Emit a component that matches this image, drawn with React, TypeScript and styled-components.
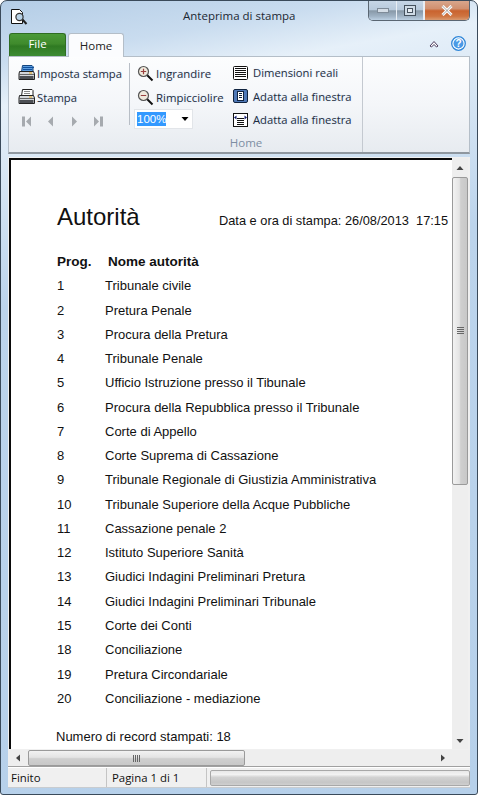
import React from 'react';
import styled, { createGlobalStyle } from 'styled-components';

const Global = createGlobalStyle`
  html, body { margin: 0; padding: 0; width: 478px; height: 795px; overflow: hidden; background: #fff; }
  * { box-sizing: border-box; }
`;

const Win = styled.div`
  width: 478px; height: 795px; display: flex; flex-direction: column;
  border: 1px solid #3a4a5a; border-radius: 7px 7px 3px 3px; overflow: hidden;
  background: linear-gradient(170deg, #b4cde6 0%, #c9dcef 7%, #e6f0f9 12%, #bcd4ec 35%, #b6d0ea 100%);
  font-family: "Open Sans", "Noto Sans", sans-serif; color: #1e2a3a;
`;
const TitleBar = styled.div`
  height: 31px; flex: none; display: flex; align-items: flex-start; position: relative;
  padding: 7px 0 0 9px;
`;
const Title = styled.div`
  position: absolute; left: 182px; top: 7px; font-size: 11.5px; line-height: 16px; color: #1c2833; white-space: nowrap;
`;
const Caption = styled.div`
  position: absolute; right: 7px; top: 0; width: 102px; height: 20px; display: flex;
  border: 1px solid #5a6672; border-top: none; border-radius: 0 0 5px 5px; overflow: hidden;
`;
const CapBtn = styled.div<{ $w: number; $close?: boolean }>`
  width: ${p => p.$w}px; display: flex; align-items: center; justify-content: center;
  border-left: ${p => p.$close ? '1px solid #e8eef4' : 'none'};
  border-right: ${p => p.$close ? 'none' : '1px solid #e8eef4'};
  background: ${p => p.$close
    ? 'linear-gradient(#d8a68c 0%, #d09070 40%, #c9632f 52%, #cf7440 80%, #d89a70 100%)'
    : 'linear-gradient(#c6d6e6 0%, #b8cadc 45%, #8899a8 52%, #9fb2c4 80%, #bcd0e2 100%)'};
`;
const TabRow = styled.div`
  height: 24px; flex: none; display: flex; align-items: flex-end; padding-left: 8px; position: relative;
`;
const FileTab = styled.div`
  width: 57px; height: 23px; border-radius: 3px 3px 0 0; border: 1px solid #2f6d22; border-bottom: none;
  background: linear-gradient(#4b9a38 0%, #3f8a2c 45%, #2f7a22 55%, #3d8b33 100%);
  color: #fff; font-size: 11.5px; font-weight: 400; line-height: 20px; text-align: center; margin-right: 2px;
`;
const HomeTab = styled.div`
  width: 56px; height: 24px; background: #fbfcfe; border: 1px solid #b4bec8; border-bottom: none;
  border-radius: 3px 3px 0 0; font-size: 11.5px; line-height: 23px; text-align: center; color: #222; margin-bottom: -1px; position: relative;
`;
const RightTools = styled.div`
  position: absolute; right: 11px; top: 4px; display: flex; gap: 12px; align-items: center;
`;
const Ribbon = styled.div`
  margin: 0 7px; height: 98px; flex: none; display: flex; border: 1px solid #b4bec8; border-bottom: 2px solid #8f979f;
  background: linear-gradient(#fcfdfe 0%, #f4f6f9 50%, #e7ebf0 100%);
`;
const LeftGroup = styled.div`
  width: 121px; flex: none; display: flex; flex-direction: column; padding: 4px 0 0 9px; position: relative;
  &::after { content: ""; position: absolute; right: 0; top: 6px; height: 62px; width: 1px; background: #b8bec6; }
`;
const MainGroup = styled.div`
  width: 233px; flex: none; border-right: 1px solid #c4c9d0; display: flex; flex-direction: column;
`;
const MainCols = styled.div`
  display: flex; height: 77px; padding: 4px 0 0 7px;
`;
const Col1 = styled.div`
  width: 96px; display: flex; flex-direction: column;
`;
const Col2 = styled.div`
  display: flex; flex-direction: column;
`;
const Btn = styled.div`
  height: 24px; display: flex; align-items: center; gap: 2px; font-size: 11.25px; color: #1f2d3d; white-space: nowrap;
  text-shadow: 0 0 2px #cfe3fa;
`;
const LensBtn = styled(Btn)`
  font-size: 11.4px;
`;
const WideBtn = styled(Btn)`
  gap: 5px; height: 23.5px;
`;
const NavRow = styled.div`
  height: 24px; display: flex; align-items: center; gap: 11px; padding-left: 2px;
`;
const Combo = styled.div`
  width: 59px; height: 20px; background: #fff; border: 1px solid #e2e5e9; display: flex; align-items: center;
  justify-content: space-between; padding: 0 3px 0 2px; font-family: "Liberation Sans", sans-serif; font-size: 11.5px; margin-left: -3px;
`;
const Selected = styled.span`
  background: #3399ff; color: #fff; line-height: 14px;
`;
const GroupLabel = styled.div`
  text-align: center; font-size: 11.5px; color: #7d8ea3; line-height: 16px; margin-top: 1px;
`;
const Preview = styled.div`
  margin: 3px 7px 0; flex: 1; min-height: 0; display: flex; flex-direction: column; background: #f0f0f0;
  border-bottom: 1px solid #a0a0a0;
`;
const PreviewTop = styled.div`
  flex: 1; min-height: 0; display: flex; padding: 1px 2px 0 1px;
`;
const Page = styled.div`
  flex: 1; min-width: 0; background: #fff; border-top: 2px solid #0a0a0a; border-left: 2px solid #0a0a0a;
  padding: 42px 0 0 46px; font-family: "Liberation Sans", Arial, sans-serif; color: #111; position: relative; overflow: hidden;
`;
const HeaderLine = styled.div`
  display: flex; align-items: baseline; height: 30px; white-space: nowrap;
`;
const Heading = styled.div`
  font-size: 24px; width: 162px; flex: none; line-height: 30px;
`;
const Stamp = styled.div`
  font-size: 12.8px;
`;
const ColHead = styled.div`
  display: flex; font-weight: 700; font-size: 13.5px; margin-top: 20px; height: 21px; line-height: 20px;
`;
const HeadProg = styled.div`
  width: 51px; flex: none;
`;
const Rows = styled.div`
  display: grid; grid-auto-rows: 24.28px; margin-top: 1.3px;
`;
const Row = styled.div`
  display: flex; font-size: 13px; line-height: 24px; white-space: nowrap;
`;
const RowNum = styled.div`
  width: 48px; flex: none;
`;
const Footer = styled.div`
  font-size: 13px; line-height: 16px; margin-top: 18px; margin-left: -1px;
`;
const VScroll = styled.div`
  width: 16px; flex: none; display: flex; flex-direction: column; background: #eeeeee; padding-top: 3px;
`;
const ArrowBox = styled.div<{ $w?: number; $h?: number }>`
  width: ${p => p.$w ? p.$w + 'px' : '100%'}; height: ${p => p.$h ? p.$h + 'px' : '100%'}; flex: none;
  display: flex; align-items: center; justify-content: center;
`;
const VThumb = styled.div`
  height: 308px; flex: none; border: 1px solid #9a9a9a; border-radius: 2px;
  background: linear-gradient(90deg, #f2f2f2 0%, #e4e4e4 45%, #cfcfcf 55%, #c8c8c8 100%);
  display: flex; align-items: center; justify-content: center;
`;
const HScroll = styled.div`
  height: 16px; flex: none; display: flex; background: #eeeeee; margin: 1px 0 0;
`;
const HThumb = styled.div`
  width: 217px; flex: none; border: 1px solid #9a9a9a; border-radius: 2px;
  background: linear-gradient(#f2f2f2 0%, #e4e4e4 45%, #cfcfcf 55%, #c8c8c8 100%);
  display: flex; align-items: center; justify-content: center;
`;
const Spacer = styled.div`
  flex: 1;
`;
const Status = styled.div`
  margin: 0 7px 6px; height: 21px; flex: none; display: flex; align-items: center; background: #f0f0f0;
  border-top: 1px solid #fff; font-size: 11.4px; color: #111; border-bottom: 1px solid #c8ccd0;
`;
const StatusCell = styled.div<{ $w: number }>`
  width: ${p => p.$w}px; flex: none; height: 100%; border-right: 1px solid #c4c4c4; padding-left: ${p => p.$w > 99 ? 5 : 3}px; line-height: 20px;
`;
const Progress = styled.div`
  flex: 1; height: 16px; margin: 0 0 0 3px; border: 1px solid #a8a8a8; border-radius: 2px;
  background: linear-gradient(#e8e8e8 0%, #f2f2f2 25%, #d2d2d2 45%, #c6c6c6 80%, #cfcfcf 100%);
`;

const Printer = ({ setup }: { setup?: boolean }) => (
  <svg width="17" height="16" viewBox="0 0 17 16">
    <path d="M4.500 0.500h9.500l1 1v5.500H3.500z" fill={setup ? '#5a9de0' : '#fff'} stroke={setup ? '#14457e' : '#222'} />
    {setup
      ? <path d="M5 2.500h11M5 4.500h9" stroke="#12509c" />
      : <path d="M6 2.500h6M6 4.500h6" stroke="#888" />}
    <path d="M1.500 6.500h14l1 2.500v5.500h-15.500v-5.500z" fill="#d4d7db" stroke="#222" />
    <path d="M1 9.500h15" stroke="#666" />
    <rect x="1.500" y="11" width="14" height="3" fill="#4c4f54" />
    <path d="M11 8h3" stroke="#e8a818" />
  </svg>
);
const Lens = ({ plus }: { plus?: boolean }) => (
  <svg width="17" height="17" viewBox="0 0 17 17">
    <path d="M10 10l5.500 5.500" stroke="#111" strokeWidth="2" />
    <circle cx="6.500" cy="6.500" r="5" fill="#efe9dc" stroke="#555" strokeWidth="1.200" />
    <path d="M3.800 6.500h5.400" stroke="#9a4040" strokeWidth="1.200" />
    {plus && <path d="M6.500 3.800v5.400" stroke="#9a4040" strokeWidth="1.200" />}
  </svg>
);
const Actual = () => (
  <svg width="15" height="14" viewBox="0 0 15 14">
    <rect x="0.500" y="0.500" width="14" height="13" rx="1" fill="#fff" stroke="#111" />
    <path d="M2 2.500h11M2 4.500h11M2 6.500h11M2 8.500h11M2 10.500h11" stroke="#111" />
  </svg>
);
const FitPage = () => (
  <svg width="15" height="14" viewBox="0 0 15 14">
    <rect x="0.500" y="0.500" width="14" height="13" rx="1.500" fill="#4f79b8" stroke="#10233f" />
    <rect x="4.500" y="2.500" width="6" height="9" fill="#fff" stroke="#10233f" />
    <path d="M6 4.500h3M6 6.500h3M6 8.500h3" stroke="#10233f" />
  </svg>
);
const FitWidth = () => (
  <svg width="15" height="14" viewBox="0 0 15 14">
    <rect x="0.500" y="0.500" width="14" height="13" fill="#fff" stroke="#111" />
    <path d="M4 5.500h7M4 7.500h7M4 9.500h7M4 11.500h7" stroke="#111" />
    <path d="M1 4.500l2.500-2v4zM14 4.500l-2.500-2v4z" fill="#101a70" />
  </svg>
);
const Nav = ({ dir, bar }: { dir: 'l' | 'r'; bar?: boolean }) => (
  <svg width="13" height="11" viewBox="0 0 13 11">
    {dir === 'l'
      ? <path d={bar ? 'M11 0.500v10L6 5.500z' : 'M9 0.500v10L4 5.500z'} fill="#a6aaaf" />
      : <path d={bar ? 'M2 0.500v10L7 5.500z' : 'M4 0.500v10L9 5.500z'} fill="#a6aaaf" />}
    {bar && <rect x={dir === 'l' ? 2 : 8} y="0.500" width="3" height="10" fill="#a6aaaf" />}
  </svg>
);
const Tri = ({ d, c = '#222' }: { d: 'u' | 'd' | 'l' | 'r'; c?: string }) => {
  const p = { u: 'M0.500 5L4 1l3.500 4z', d: 'M0.500 2h7L4 6z', l: 'M6 0.500v7L2 4z', r: 'M2 0.500v7L6 4z' }[d];
  return <svg width="8" height="8" viewBox="0 0 8 8"><path d={p} fill={c} /></svg>;
};
const GripV = () => (
  <svg width="7" height="8" viewBox="0 0 7 8"><path d="M0 0.500h7M0 2.500h7M0 4.500h7M0 6.500h7" stroke="#666" /></svg>
);
const GripH = () => (
  <svg width="8" height="7" viewBox="0 0 8 7"><path d="M0.500 0v7M2.500 0v7M4.500 0v7M6.500 0v7" stroke="#666" /></svg>
);

const rows: [number, string][] = [
  [1, 'Tribunale civile'], [2, 'Pretura Penale'], [3, 'Procura della Pretura'], [4, 'Tribunale Penale'],
  [5, 'Ufficio Istruzione presso il Tibunale'], [6, 'Procura della Repubblica presso il Tribunale'],
  [7, 'Corte di Appello'], [8, 'Corte Suprema di Cassazione'],
  [9, 'Tribunale Regionale di Giustizia Amministrativa'], [10, 'Tribunale Superiore della Acque Pubbliche'],
  [11, 'Cassazione penale 2'], [12, 'Istituto Superiore Sanità'], [13, 'Giudici Indagini Preliminari Pretura'],
  [14, 'Giudici Indagini Preliminari Tribunale'], [15, 'Corte dei Conti'], [18, 'Conciliazione'],
  [19, 'Pretura Circondariale'], [20, 'Conciliazione - mediazione'],
];

export default function App() {
  return (
    <>
      <Global />
      <Win>
        <TitleBar>
          <svg width="18" height="18" viewBox="0 0 18 18">
            <path d="M1.500 1.500h8l3 3v11h-11z" fill="#fff" stroke="#111" />
            <path d="M12 11l4.500 5" stroke="#222" strokeWidth="2" />
            <circle cx="9.500" cy="9" r="3.600" fill="#b9d3e8" stroke="#333" strokeWidth="1.200" />
          </svg>
          <Title>Anteprima di stampa</Title>
          <Caption>
            <CapBtn $w={28}>
              <svg width="12" height="6" viewBox="0 0 12 6"><rect x="0.500" y="0.500" width="11" height="4" fill="#d4dde6" stroke="#7e8b98" /></svg>
            </CapBtn>
            <CapBtn $w={27}>
              <svg width="12" height="11" viewBox="0 0 12 11"><rect x="0.500" y="0.500" width="11" height="10" fill="#cfdbe6" stroke="#46525e" /><rect x="3.500" y="3.500" width="5" height="4" fill="#e8eef4" stroke="#46525e" /></svg>
            </CapBtn>
            <CapBtn $w={45} $close>
              <svg width="12" height="11" viewBox="0 0 12 11"><path d="M1.500 1l9 9M10.500 1l-9 9" stroke="#fff" strokeWidth="3" /><path d="M1.500 1l9 9M10.500 1l-9 9" stroke="#4a4a4a" strokeWidth="0.500" /></svg>
            </CapBtn>
          </Caption>
        </TitleBar>
        <TabRow>
          <FileTab>File</FileTab>
          <HomeTab>Home</HomeTab>
          <RightTools>
            <svg width="10" height="8" viewBox="0 0 10 8"><path d="M1 6L5 1.500 9 6 7.500 7 5 4.500 2.500 7z" fill="#fff" stroke="#4a3a5a" /></svg>
            <svg width="15" height="15" viewBox="0 0 15 15">
              <circle cx="7.500" cy="7.500" r="6.800" fill="#fff" stroke="#2f86d8" strokeWidth="1.300" />
              <circle cx="7.500" cy="7.500" r="5" fill="#4a9ae6" />
              <text x="7.500" y="11" textAnchor="middle" fontSize="10" fontWeight="700" fontFamily="Liberation Sans" fill="#fff">?</text>
            </svg>
          </RightTools>
        </TabRow>
        <Ribbon>
          <LeftGroup>
            <Btn><Printer setup />Imposta stampa</Btn>
            <Btn><Printer />Stampa</Btn>
            <NavRow>
              <Nav dir="l" bar /><Nav dir="l" /><Nav dir="r" /><Nav dir="r" bar />
            </NavRow>
          </LeftGroup>
          <MainGroup>
            <MainCols>
              <Col1>
                <LensBtn><Lens plus />Ingrandire</LensBtn>
                <LensBtn><Lens />Rimpicciolire</LensBtn>
                <Combo><Selected>100%</Selected><Tri d="d" c="#000" /></Combo>
              </Col1>
              <Col2>
                <WideBtn><Actual />Dimensioni reali</WideBtn>
                <WideBtn><FitPage />Adatta alla finestra</WideBtn>
                <WideBtn><FitWidth />Adatta alla finestra</WideBtn>
              </Col2>
            </MainCols>
            <GroupLabel>Home</GroupLabel>
          </MainGroup>
        </Ribbon>
        <Preview>
          <PreviewTop>
            <Page>
              <HeaderLine>
                <Heading>Autorità</Heading>
                <Stamp>Data e ora di stampa: 26/08/2013&nbsp;&nbsp;17:15</Stamp>
              </HeaderLine>
              <ColHead><HeadProg>Prog.</HeadProg>Nome autorità</ColHead>
              <Rows>
                {rows.map(([n, t]) => (
                  <Row key={n}><RowNum>{n}</RowNum>{t}</Row>
                ))}
              </Rows>
              <Footer>Numero di record stampati: 18</Footer>
            </Page>
            <VScroll>
              <ArrowBox $h={16}><Tri d="u" c="#444" /></ArrowBox>
              <VThumb><GripV /></VThumb>
              <Spacer />
              <ArrowBox $h={16}><Tri d="d" c="#444" /></ArrowBox>
            </VScroll>
          </PreviewTop>
          <HScroll>
            <ArrowBox $w={20} $h={16}><Tri d="l" c="#444" /></ArrowBox>
            <HThumb><GripH /></HThumb>
            <Spacer />
            <ArrowBox $w={18} $h={16}><Tri d="r" c="#444" /></ArrowBox>
            <ArrowBox $w={18} $h={16} />
          </HScroll>
        </Preview>
        <Status>
          <StatusCell $w={99}>Finito</StatusCell>
          <StatusCell $w={100}>Pagina 1 di 1</StatusCell>
          <Progress />
        </Status>
      </Win>
    </>
  );
}
